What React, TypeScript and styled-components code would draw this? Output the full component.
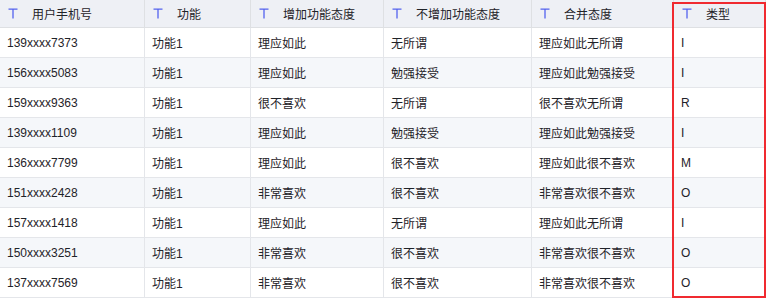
import styled, { createGlobalStyle } from "styled-components";

const GlobalStyle = createGlobalStyle`
	html, body {
		margin: 0;
		padding: 0;
		background: #ffffff;
	}
	body {
		font-family: "Liberation Sans", "Noto Sans CJK SC", sans-serif;
		font-size: 12px;
		color: #1f2329;
	}
`;

const COLUMNS = ["用户手机号", "功能", "增加功能态度", "不增加功能态度", "合并态度", "类型"];

const ROWS: string[][] = [
	["139xxxx7373", "功能1", "理应如此", "无所谓", "理应如此无所谓", "I"],
	["156xxxx5083", "功能1", "理应如此", "勉强接受", "理应如此勉强接受", "I"],
	["159xxxx9363", "功能1", "很不喜欢", "无所谓", "很不喜欢无所谓", "R"],
	["139xxxx1109", "功能1", "理应如此", "勉强接受", "理应如此勉强接受", "I"],
	["136xxxx7799", "功能1", "理应如此", "很不喜欢", "理应如此很不喜欢", "M"],
	["151xxxx2428", "功能1", "非常喜欢", "很不喜欢", "非常喜欢很不喜欢", "O"],
	["157xxxx1418", "功能1", "理应如此", "无所谓", "理应如此无所谓", "I"],
	["150xxxx3251", "功能1", "非常喜欢", "很不喜欢", "非常喜欢很不喜欢", "O"],
	["137xxxx7569", "功能1", "非常喜欢", "很不喜欢", "非常喜欢很不喜欢", "O"],
];

const Wrapper = styled.div`
	position: relative;
	width: 766px;
	height: 298px;
	overflow: hidden;
`;

const Grid = styled.div`
	display: grid;
	grid-template-columns: 145px 106px 133px 148px 142px 92px;
`;

const HeadCell = styled.div`
	display: flex;
	align-items: center;
	gap: 14px;
	height: 27px;
	padding-left: 8px;
	background: #eef0f5;
	border-right: 1px solid #dee0e3;
	border-bottom: 1px solid #dee0e3;
	font-family: "Noto Sans CJK SC", sans-serif;
	font-size: 12px;
	color: #1f2329;
	white-space: nowrap;
`;

const Cell = styled.div<{ $striped: boolean }>`
	display: flex;
	align-items: center;
	height: 29px;
	padding-left: 7px;
	background: ${(p) => (p.$striped ? "#f5f7fa" : "#ffffff")};
	border-right: 1px solid #e4e6ea;
	border-bottom: 1px solid #e4e6ea;
	font-family: "Liberation Sans", "Noto Sans CJK SC", sans-serif;
	font-size: 12px;
	color: #1f2329;
	white-space: nowrap;
`;

const Highlight = styled.div`
	position: absolute;
	left: 672px;
	top: 2px;
	width: 94px;
	height: 296px;
	box-sizing: border-box;
	border: 2px solid #f02a30;
	pointer-events: none;
`;

const TextIcon = () => (
	<svg width="10" height="11" viewBox="0 0 10 11" aria-hidden>
		<path d="M0.5 1.2 H9.5 M5 1.2 V10.5" stroke="#5462ee" strokeWidth="1.3" fill="none" />
	</svg>
);

const App = () => {
	return (
		<>
			<GlobalStyle />
			<Wrapper>
				<Grid>
					{COLUMNS.map((col) => (
						<HeadCell key={col}>
							<TextIcon />
							<span>{col}</span>
						</HeadCell>
					))}
					{ROWS.map((row, r) =>
						row.map((value, c) => (
							<Cell key={r + "-" + c} $striped={r % 2 === 1}>
								{value}
							</Cell>
						))
					)}
				</Grid>
				<Highlight />
			</Wrapper>
		</>
	);
};

export default App;
